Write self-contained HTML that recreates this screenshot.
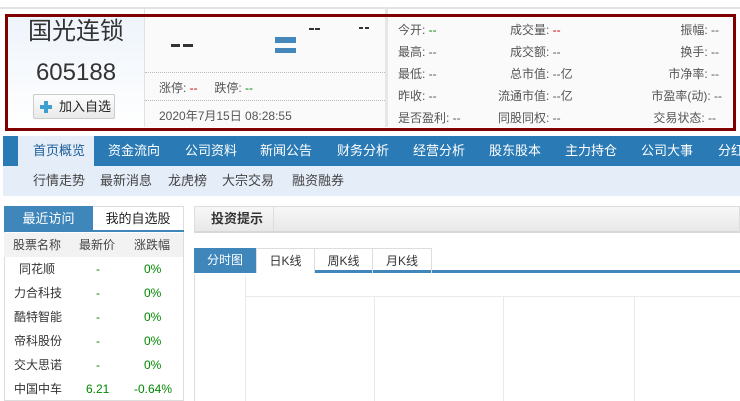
<!DOCTYPE html>
<html><head><meta charset="utf-8">
<style>
*{margin:0;padding:0;box-sizing:border-box}
body{width:740px;height:401px;overflow:hidden;background:#fff;font-family:"Liberation Sans","Noto Sans CJK SC",sans-serif;font-size:12px;color:#333;position:relative}
.a{position:absolute}
.nav span{position:absolute;top:0;line-height:30px;color:#fff;font-size:13px;white-space:nowrap}
.sub span{position:absolute;top:0;line-height:30px;color:#444;font-size:13px;white-space:nowrap}
.q{position:absolute;color:#555;font-size:12px;white-space:nowrap}
.row{position:absolute;left:4px;width:179px;height:24px;line-height:24px;font-size:12px}
.row b{font-weight:normal;position:absolute;white-space:nowrap}
.g{color:#080}
.bar{position:absolute;background:#333;height:3px}
</style></head><body>
<div class="a" style="left:0;top:7px;width:740px;height:2px;background:#e2e2e2"></div>
<div class="a" style="left:144px;top:7px;width:1px;height:120px;background:#e2e2e2"></div>
<div class="a" style="left:385px;top:7px;width:3px;height:120px;background:#e6e6e6"></div>
<div class="a" style="left:8px;top:17px;width:136px;height:110px;background:linear-gradient(#eef4fb,#fff)"></div>
<div class="a" style="left:145px;top:17px;width:240px;height:110px;background:#fafafa"></div>
<div class="a" style="left:388px;top:17px;width:344px;height:110px;background:#fafafa"></div>
<div class="a" style="left:8px;top:17px;width:136px;text-align:center;font-size:24px;color:#333;line-height:30px">国光连锁</div>
<div class="a" style="left:8px;top:58px;width:136px;text-align:center;font-size:24px;color:#333;line-height:30px">605188</div>
<div class="a" style="left:33px;top:94px;width:82px;height:25px;border:1px solid #ccc;border-radius:2px;background:linear-gradient(#fdfdfd,#e9e9e9);font-size:13px;line-height:23px;padding-left:25px;color:#222;white-space:nowrap">加入自选</div>
<div class="a" style="left:44px;top:101px;width:4px;height:12px;background:#3fa0d0"></div>
<div class="a" style="left:40px;top:105px;width:12px;height:4px;background:#3fa0d0"></div>
<div class="bar" style="left:171px;top:44px;width:9px"></div>
<div class="bar" style="left:183px;top:44px;width:10px"></div>
<div class="a" style="left:275px;top:37px;width:21px;height:6px;background:#4488bb"></div>
<div class="a" style="left:275px;top:48px;width:21px;height:5px;background:#4488bb"></div>
<div class="bar" style="left:309px;top:28px;width:5px;height:2px"></div>
<div class="bar" style="left:315px;top:28px;width:5px;height:2px"></div>
<div class="bar" style="left:359px;top:27px;width:4px;height:2px"></div>
<div class="bar" style="left:365px;top:27px;width:4px;height:2px"></div>
<div class="a" style="left:145px;top:72px;width:240px;border-top:1px dotted #bbb"></div>
<div class="a" style="left:145px;top:100px;width:240px;border-top:1px dotted #bbb"></div>
<div class="q" style="left:159px;top:79px">涨停: <span style="color:#c00">--</span>&nbsp;&nbsp;&nbsp;&nbsp;&nbsp;跌停: <span class="g">--</span></div>
<div class="q" style="left:159px;top:107px">2020年7月15日 08:28:55</div>
<div class="q" style="left:398px;top:21px">今开: <span class="g">--</span></div>
<div class="q" style="left:398px;top:43px">最高: --</div>
<div class="q" style="left:398px;top:65px">最低: --</div>
<div class="q" style="left:398px;top:87px">昨收: --</div>
<div class="q" style="left:398px;top:109px">是否盈利: --</div>
<div class="q" style="left:510px;top:21px">成交量: <span style="color:#c00">--</span></div>
<div class="q" style="left:510px;top:43px">成交额: --</div>
<div class="q" style="left:510px;top:65px">总市值: --亿</div>
<div class="q" style="left:498px;top:87px">流通市值: --亿</div>
<div class="q" style="left:498px;top:109px">同股同权: --</div>
<div class="q" style="right:21px;top:21px">振幅: --</div>
<div class="q" style="right:21px;top:43px">换手: --</div>
<div class="q" style="right:21px;top:65px">市净率: --</div>
<div class="q" style="right:18px;top:87px">市盈率(动): --</div>
<div class="q" style="right:24px;top:109px">交易状态: --</div>
<div class="a" style="left:5px;top:14px;width:731px;height:117px;border:3px solid #800000"></div>
<div class="a nav" style="left:3px;top:136px;width:737px;height:30px;background:#2a7ab5;overflow:hidden">
<div class="a" style="left:15px;top:0;width:76px;height:30px;background:#e5edf8"></div>
<span style="left:30px;color:#1a5d99">首页概览</span><span style="left:105px">资金流向</span><span style="left:182px">公司资料</span><span style="left:257px">新闻公告</span><span style="left:334px">财务分析</span><span style="left:410px">经营分析</span><span style="left:486px">股东股本</span><span style="left:562px">主力持仓</span><span style="left:638px">公司大事</span><span style="left:715px">分红</span>
</div>
<div class="a sub" style="left:3px;top:166px;width:737px;height:30px;background:#e5edf8">
<span style="left:30px">行情走势</span><span style="left:97px">最新消息</span><span style="left:165px">龙虎榜</span><span style="left:219px">大宗交易</span><span style="left:289px">融资融券</span>
</div>
<div class="a" style="left:4px;top:206px;width:180px;height:195px;border:1px solid #ddd;border-top:none"></div>
<div class="a" style="left:4px;top:206px;width:180px;height:26px;border-top:1px solid #ddd;border-bottom:2px solid #3f86bb"></div>
<div class="a" style="left:4px;top:206px;width:89px;height:26px;background:#3f86bb;color:#fff;text-align:center;line-height:26px;font-size:13px">最近访问</div>
<div class="a" style="left:93px;top:207px;width:90px;height:24px;color:#222;text-align:center;line-height:24px;font-size:13px">我的自选股</div>
<div class="row" style="top:233px;background:#f2f2f2;color:#444;height:24px"><b style="left:9px">股票名称</b><b style="left:75px">最新价</b><b style="left:130px">涨跌幅</b></div>
<div class="row" style="top:257px"><b style="left:15px">同花顺</b><b class="g" style="left:92px">-</b><b class="g" style="left:140px">0%</b></div>
<div class="row" style="top:281px"><b style="left:10px">力合科技</b><b class="g" style="left:92px">-</b><b class="g" style="left:140px">0%</b></div>
<div class="row" style="top:305px"><b style="left:10px">酷特智能</b><b class="g" style="left:92px">-</b><b class="g" style="left:140px">0%</b></div>
<div class="row" style="top:329px"><b style="left:10px">帝科股份</b><b class="g" style="left:92px">-</b><b class="g" style="left:140px">0%</b></div>
<div class="row" style="top:353px"><b style="left:10px">交大思诺</b><b class="g" style="left:92px">-</b><b class="g" style="left:140px">0%</b></div>
<div class="row" style="top:377px"><b style="left:10px">中国中车</b><b class="g" style="left:82px">6.21</b><b class="g" style="left:130px">-0.64%</b></div>
<div class="a" style="left:194px;top:206px;width:546px;height:27px;border:1px solid #ddd;border-bottom:2px solid #d8d8d8;background:linear-gradient(#f7f7f7,#e8e8e8)"></div>
<div class="a" style="left:194px;top:207px;width:80px;height:24px;line-height:24px;padding-left:17px;font-weight:bold;font-size:13px;color:#333;border-right:1px solid #ddd;white-space:nowrap">投资提示</div>
<div class="a" style="left:194px;top:248px;width:546px;height:25px;border-bottom:3px solid #3f86bb"></div>
<div class="a" style="left:194px;top:248px;width:62px;height:25px;background:#3f86bb;color:#fff;text-align:center;line-height:24px;font-size:12px">分时图</div>
<div class="a" style="left:256px;top:248px;width:59px;height:25px;border:1px solid #ddd;border-bottom:none;text-align:center;line-height:24px;font-size:12px;background:#fff">日K线</div>
<div class="a" style="left:315px;top:248px;width:58px;height:25px;border:1px solid #ddd;border-bottom:none;border-left:none;text-align:center;line-height:24px;font-size:12px">周K线</div>
<div class="a" style="left:373px;top:248px;width:59px;height:25px;border:1px solid #ddd;border-bottom:none;border-left:none;text-align:center;line-height:24px;font-size:12px">月K线</div>
<div class="a" style="left:194px;top:275px;width:1px;height:126px;background:#ddd"></div>
<div class="a" style="left:245px;top:276px;width:1px;height:125px;background:#eaeaea"></div>
<div class="a" style="left:245px;top:296px;width:495px;height:1px;background:#eaeaea"></div>
<div class="a" style="left:374px;top:296px;width:1px;height:105px;background:#eaeaea"></div>
<div class="a" style="left:503px;top:296px;width:1px;height:105px;background:#eaeaea"></div>
<div class="a" style="left:634px;top:296px;width:1px;height:105px;background:#eaeaea"></div>
</body></html>
